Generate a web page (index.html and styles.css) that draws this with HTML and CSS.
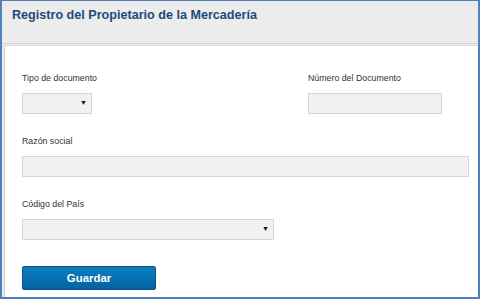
FILE: index.html
```html
<!DOCTYPE html>
<html lang="es">
<head>
  <meta charset="UTF-8" />
  <title>Registro del Propietario de la Mercadería</title>
  <link rel="stylesheet" href="styles.css">
</head>
<body>
  <div class="frame">
    <div class="header">
      <h1>Registro del Propietario de la Mercadería</h1>
    </div>
    <div class="panel">
      <div class="row">
        <div class="field tipo">
          <label for="tipo">Tipo de documento</label>
          <div class="select short"><span class="arrow">&#9660;</span></div>
        </div>
        <div class="field numero">
          <label for="numero">Número del Documento</label>
          <input type="text" id="numero" class="input" />
        </div>
      </div>
      <div class="field">
        <label for="razon">Razón social</label>
        <input type="text" id="razon" class="input wide" />
      </div>
      <div class="field">
        <label>Código del País</label>
        <div class="select pais"><span class="arrow">&#9660;</span></div>
      </div>
      <button class="btn">Guardar</button>
    </div>
  </div>
</body>
</html>
```

FILE: styles.css
```css
html, body {
  margin: 0;
  padding: 0;
}
body {
  font-family: "Liberation Sans", Arial, sans-serif;
  width: 480px;
  height: 299px;
  overflow: hidden;
}
.frame {
  width: 480px;
  height: 299px;
  box-sizing: border-box;
  border: 2px solid #4f81bd;
  border-top-width: 1px;
  background: #ececec;
  display: flex;
  flex-direction: column;
}
.header {
  height: 42px;
  border-bottom: 1px solid #d4d4d4;
  padding: 0 0 0 10px;
}
h1 {
  margin: 0;
  padding-top: 7px;
  font-size: 12.6px;
  font-weight: bold;
  color: #1c4b7a;
}
.panel {
  flex: 1;
  margin: 1px 0 0 2px;
  background: #fff;
  border-left: 1px solid #d0d0d0;
  border-top: 1px solid #d8d8d8;
  padding: 27px 0 0 17px;
}
.row {
  display: flex;
}
.tipo {
  width: 286px;
}
.field {
  margin-bottom: 22px;
}
label {
  display: block;
  font-size: 8.8px;
  color: #333;
  margin-bottom: 10px;
}
.input, .select {
  box-sizing: border-box;
  height: 21px;
  background: #f1f1f1;
  border: 1px solid #d6d6d6;
  border-radius: 0;
  margin: 0;
  padding: 0 4px;
}
.input {
  width: 134px;
  display: block;
}
.input.wide {
  width: 447px;
}
.select {
  position: relative;
  width: 70px;
}
.select.pais {
  width: 252px;
}
.arrow {
  position: absolute;
  right: 4px;
  top: 5px;
  font-size: 7px;
  color: #111;
}
.btn {
  display: block;
  margin-top: 26px;
  width: 134px;
  height: 24px;
  border: 1px solid #045289;
  border-radius: 2px;
  background: linear-gradient(#0b7fc2, #05629f);
  color: #fff;
  font-family: "Liberation Sans", Arial, sans-serif;
  font-weight: bold;
  font-size: 11.4px;
}
```
